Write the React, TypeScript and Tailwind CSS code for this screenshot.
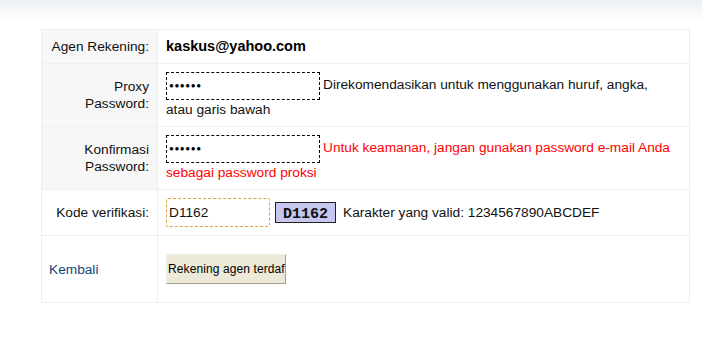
const font = { fontFamily: '"Liberation Sans", Arial, sans-serif' };

function Label({ children, gray = true, left = false }: { children: React.ReactNode; gray?: boolean; left?: boolean }) {
  return (
    <div
      className={`flex items-center border-b border-r border-[#efefef] text-[13.7px] leading-[17px] ${
        gray ? "bg-[#f7f7f7]" : "bg-white"
      } ${left ? "justify-start pl-[7px]" : "justify-end pr-[8px] text-right"}`}
    >
      {children}
    </div>
  );
}

function Value({ children }: { children: React.ReactNode }) {
  return (
    <div className="flex items-center border-b border-[#efefef] bg-white pl-[8px] text-[13.7px] leading-[17px]">
      {children}
    </div>
  );
}

function PasswordBox() {
  return (
    <span className="inline-flex h-[28px] w-[154px] items-center border border-dashed border-black bg-white pl-[2px] align-middle text-[8px] font-bold tracking-[0.6px] text-black">
      ●●●●●●
    </span>
  );
}

export default function App() {
  return (
    <div className="h-[349px] w-[702px] overflow-hidden bg-white text-[#111]" style={font}>
      <div className="h-[22px] bg-gradient-to-b from-[#edf1f5] to-white" />
      <div className="ml-[41px] mt-[7px] grid w-[649px] grid-cols-[116px_1fr] grid-rows-[34px_63px_63px_46px_67px] border-l border-t border-r border-[#efefef]">
        <Label>Agen Rekening:</Label>
        <Value>
          <span className="text-[14.5px] font-bold text-black">kaskus@yahoo.com</span>
        </Value>

        <Label>
          <span>
            Proxy
            <br />
            Password:
          </span>
        </Label>
        <Value>
          <div className="-mt-[1px]">
            <div className="flex items-center whitespace-nowrap">
              <PasswordBox />
              <span className="ml-[3px] -mt-[2px]">Direkomendasikan untuk menggunakan huruf, angka,</span>
            </div>
            <div className="mt-[1px] whitespace-nowrap">atau garis bawah</div>
          </div>
        </Value>

        <Label>
          <span>
            Konfirmasi
            <br />
            Password:
          </span>
        </Label>
        <Value>
          <div className="-mt-[1px] text-[#ff0000]">
            <div className="flex items-center whitespace-nowrap">
              <PasswordBox />
              <span className="ml-[3px] -mt-[2px]">Untuk keamanan, jangan gunakan password e-mail Anda</span>
            </div>
            <div className="mt-[1px] whitespace-nowrap">sebagai password proksi</div>
          </div>
        </Value>

        <Label gray={false}>Kode verifikasi:</Label>
        <Value>
          <div className="flex items-center">
            <span className="flex h-[29px] w-[104px] items-center rounded-[2px] border border-dashed border-[#e0a23c] bg-white pl-[2px]">
              D1162
            </span>
            <span
              className="ml-[5px] flex h-[21px] w-[61px] items-center justify-center border border-[#222] bg-[#c6c6ee] pt-[3px] text-[15px] font-bold text-[#111]"
              style={{ fontFamily: '"Liberation Mono", "Courier New", monospace' }}
            >
              D1162
            </span>
            <span className="ml-[7px]">Karakter yang valid: 1234567890ABCDEF</span>
          </div>
        </Value>

        <Label gray={false} left>
          <span className="text-[#14457d]">Kembali</span>
        </Label>
        <Value>
          <button className="flex h-[30px] w-[120px] items-center whitespace-nowrap border border-b-[#a3a08c] border-l-[#f4f2e8] border-r-[#a3a08c] border-t-[#f4f2e8] bg-[#ece9d8] pl-[1px] text-[12px] tracking-[0.1px] text-black">
            Rekening agen terdaf
          </button>
        </Value>
      </div>
    </div>
  );
}
